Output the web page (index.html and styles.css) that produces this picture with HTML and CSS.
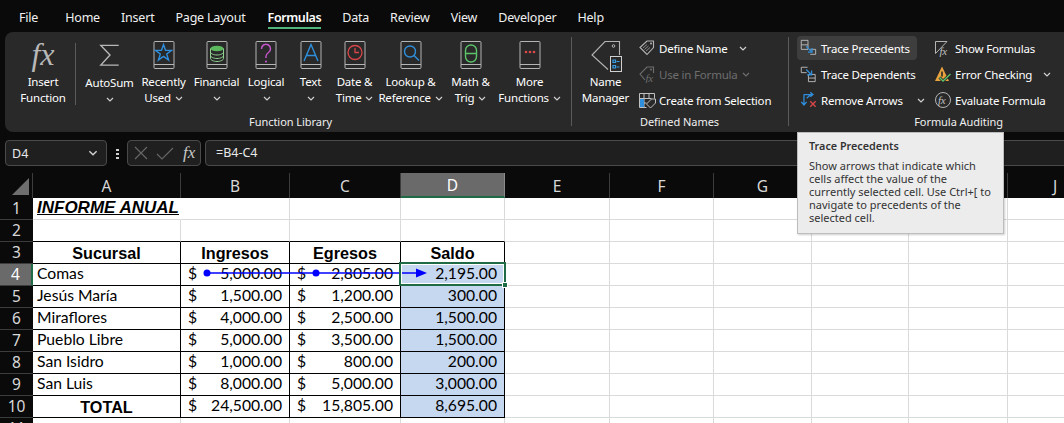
FILE: index.html
```html
<!DOCTYPE html>
<html lang="en">
<head>
  <meta charset="UTF-8">
  <title>INFORME ANUAL - Excel</title>
  <link rel="stylesheet" href="styles.css">
</head>
<body>
  <svg class="defs" aria-hidden="true">
    <symbol id="book" viewBox="0 0 22 28">
      <path d="M2 .5h18a1 1 0 0 1 1 1v25a1 1 0 0 1-1 1H2a1 1 0 0 1-1-1v-25a1 1 0 0 1 1-1zM1 23.5h20" fill="none" stroke="#b4b4b4" stroke-width="1"/>
    </symbol>
    <symbol id="chev" viewBox="0 0 8 5">
      <path d="M1 1l3 3 3-3" fill="none" stroke="currentColor" stroke-width="1.2"/>
    </symbol>
  </svg>

  <nav class="tabs">
    <span class="tab tab-file">File</span>
    <span class="tab">Home</span>
    <span class="tab">Insert</span>
    <span class="tab">Page Layout</span>
    <span class="tab active">Formulas</span>
    <span class="tab">Data</span>
    <span class="tab">Review</span>
    <span class="tab">View</span>
    <span class="tab">Developer</span>
    <span class="tab">Help</span>
  </nav>

  <section class="ribbon">
    <div class="group group-lib">
      <div class="lib-tools">
        <div class="tool">
          <span class="fx-big">fx</span>
          <span class="tool-label">Insert<br>Function</span>
        </div>
        <div class="tool-sep"></div>
        <div class="tool tool-low">
          <svg class="book" viewBox="0 0 24 28"><path d="M21.5 3.5H2l10 10.500L2 25h19.500" fill="none" stroke="#b8b8b8" stroke-width="1.500"/></svg>
          <span class="tool-label">AutoSum<br><svg class="chev"><use href="#chev"/></svg></span>
        </div>
        <div class="tool">
          <svg class="book" viewBox="0 0 22 28"><use href="#book"/><path d="M10.500 3.500L12.500 9.200 18.600 9.400 13.700 13 15.500 18.900 10.500 15.400 5.500 18.900 7.300 13 2.400 9.400 8.500 9.200z" fill="none" stroke="#2f8fdc" stroke-width="1.400"/></svg>
          <span class="tool-label">Recently<br>Used <svg class="chev"><use href="#chev"/></svg></span>
        </div>
        <div class="tool">
          <svg class="book" viewBox="0 0 22 28"><use href="#book"/><ellipse cx="11" cy="7.500" rx="6.500" ry="2.800" fill="#5cb85c"/><path d="M4.500 7.500v10c0 1.500 3 3 6.500 3s6.500-1.500 6.500-3v-10M4.500 11c0 1.500 3 3 6.500 3s6.500-1.500 6.500-3M4.500 14.500c0 1.500 3 3 6.500 3s6.500-1.500 6.500-3" fill="none" stroke="#8fd08f" stroke-width="1"/></svg>
          <span class="tool-label">Financial<br><svg class="chev"><use href="#chev"/></svg></span>
        </div>
        <div class="tool">
          <svg class="book" viewBox="0 0 22 28"><use href="#book"/><path d="M6.500 8a4.500 4.500 0 1 1 7 3.500c-1.500 1-2.500 2-2.500 4v1.500" fill="none" stroke="#c455c8" stroke-width="1.500"/><circle cx="11" cy="20.500" r="1.100" fill="#c455c8"/></svg>
          <span class="tool-label">Logical<br><svg class="chev"><use href="#chev"/></svg></span>
        </div>
        <div class="tool">
          <svg class="book" viewBox="0 0 22 28"><use href="#book"/><path d="M4 20L11 3.500 18 20M6.300 14.500h9.400" fill="none" stroke="#2f8fdc" stroke-width="1.400"/></svg>
          <span class="tool-label">Text<br><svg class="chev"><use href="#chev"/></svg></span>
        </div>
        <div class="tool">
          <svg class="book" viewBox="0 0 22 28"><use href="#book"/><circle cx="11" cy="11.500" r="7" fill="none" stroke="#d9464a" stroke-width="1.300"/><path d="M11 7v4.500h4" fill="none" stroke="#d9464a" stroke-width="1.300"/></svg>
          <span class="tool-label">Date &amp;<br>Time <svg class="chev"><use href="#chev"/></svg></span>
        </div>
        <div class="tool">
          <svg class="book" viewBox="0 0 22 28"><use href="#book"/><circle cx="10" cy="10.500" r="5.500" fill="none" stroke="#2f8fdc" stroke-width="1.400"/><path d="M14 14.500l5 5" fill="none" stroke="#2f8fdc" stroke-width="1.400"/></svg>
          <span class="tool-label">Lookup &amp;<br>Reference <svg class="chev"><use href="#chev"/></svg></span>
        </div>
        <div class="tool">
          <svg class="book" viewBox="0 0 22 28"><use href="#book"/><rect x="5.500" y="4" width="11" height="17" rx="5.500" fill="none" stroke="#5cc46a" stroke-width="1.400"/><path d="M5.500 12.500h11" stroke="#5cc46a" stroke-width="1.400"/></svg>
          <span class="tool-label">Math &amp;<br>Trig <svg class="chev"><use href="#chev"/></svg></span>
        </div>
        <div class="tool">
          <svg class="book" viewBox="0 0 22 28"><use href="#book"/><circle cx="7" cy="11" r="1.300" fill="#e04848"/><circle cx="11" cy="11" r="1.300" fill="#e04848"/><circle cx="15" cy="11" r="1.300" fill="#e04848"/></svg>
          <span class="tool-label">More<br>Functions <svg class="chev"><use href="#chev"/></svg></span>
        </div>
      </div>
      <div class="group-name">Function Library</div>
    </div>

    <div class="group group-names">
      <div class="names-tools">
        <div class="tool tool-name">
          <svg class="name-icon" viewBox="0 0 40 33">
            <path d="M22 33.500L6 19 19 5.500h14.500V19" fill="none" stroke="#b4b4b4" stroke-width="1.100"/>
            <circle cx="27.500" cy="10" r="1.300" fill="none" stroke="#b4b4b4"/>
            <rect x="24.500" y="20.500" width="11" height="15" fill="#292929" stroke="#d0d0d0"/>
            <path d="M27 24h2.500v2.500H27zM27 29.500h2.500V32H27z" fill="none" stroke="#3a9be6" stroke-width="1.200"/>
            <path d="M30.500 25.500h3M30.500 31h3" stroke="#3a9be6" stroke-width="1.200"/>
          </svg>
          <span class="tool-label">Name<br>Manager</span>
        </div>
        <div class="small-col">
          <div class="small-row">
            <svg class="small-icon" viewBox="0 0 18 18"><path d="M2 8.500L9 2h6.500v6.500L9 15.500z" fill="none" stroke="#b4b4b4" stroke-width="1.100"/><path d="M5 9l4-3.500M6.500 10.500L10.500 7M8 12l4-3.500" stroke="#8a8a8a"/><circle cx="13" cy="4.500" r="1" fill="#b4b4b4"/></svg>
            <span>Define Name</span>
            <svg class="chev chev-define"><use href="#chev"/></svg>
          </div>
          <div class="small-row disabled">
            <svg class="small-icon" viewBox="0 0 18 18"><path d="M7 15L2 9l7-7h6.500v6" fill="none" stroke="#6e6e6e" stroke-width="1.100"/><circle cx="13" cy="4.500" r="1" fill="#6e6e6e"/><text x="7.500" y="16.500" class="fx-small">fx</text></svg>
            <span>Use in Formula</span>
            <svg class="chev"><use href="#chev"/></svg>
          </div>
          <div class="small-row">
            <svg class="small-icon" viewBox="0 0 18 18"><path d="M1.500 2.500h15v5M1.500 2.500v14h7M1.500 7.500h12M1.500 12h7M6 2.500v14M11 2.500v5" fill="none" stroke="#c0c0c0"/><path d="M2 8h4v8H2z" fill="#2f8fdc"/><path d="M8.500 13l5-5h4v4l-5 5z" fill="#292929" stroke="#c0c0c0"/></svg>
            <span>Create from Selection</span>
          </div>
        </div>
      </div>
      <div class="group-name">Defined Names</div>
    </div>

    <div class="group group-audit">
      <div class="audit-tools">
        <div class="small-col col-trace">
          <div class="small-row hover">
            <svg class="small-icon" viewBox="0 0 20 20"><path d="M2.500 1.500h7.500v10H2.500zM2.500 6.500h7.500M12.500 11.500h6v5.500h-6" fill="none" stroke="#c0c0c0"/><path d="M8 8l6 6M14.500 10v4.500H10" fill="none" stroke="#2f8fdc" stroke-width="1.400"/></svg>
            <span>Trace Precedents</span>
          </div>
          <div class="small-row">
            <svg class="small-icon" viewBox="0 0 20 20"><path d="M9.500 2.500h-7v6h6M10.500 10.500h7.500v8h-7.500zM10.500 14.500h7.500" fill="none" stroke="#c0c0c0"/><path d="M8 5l5.500 5.500M14 6v5h-5" fill="none" stroke="#2f8fdc" stroke-width="1.400"/></svg>
            <span>Trace Dependents</span>
          </div>
          <div class="small-row">
            <svg class="small-icon" viewBox="0 0 20 20"><path d="M5.500 4v11M2.500 12l3 3.500 3-3.500M5.500 4h10M12.500 1.500l3 2.500-3 2.500M8.500 8l4-3.500" fill="none" stroke="#2f8fdc" stroke-width="1.400"/><path d="M12.500 11.500l6 6M18.500 11.500l-6 6" stroke="#d9464a" stroke-width="1.500"/></svg>
            <span>Remove Arrows</span>
            <svg class="chev chev-remove"><use href="#chev"/></svg>
          </div>
        </div>
        <div class="small-col col-check">
          <div class="small-row">
            <svg class="small-icon" viewBox="0 0 18 18"><path d="M13 2.500H1.500v12M1.500 14.500l11.500-12" fill="none" stroke="#b4b4b4"/><text x="5.500" y="16" class="fx-tool">fx</text></svg>
            <span>Show Formulas</span>
          </div>
          <div class="small-row">
            <svg class="small-icon" viewBox="0 0 18 18"><path d="M8 1.500L1 16h14z" fill="#e8a33d"/><path d="M8 6.500v5" stroke="#292929" stroke-width="1.600"/><path d="M5.500 12.500l3.500 3.500 7.500-7" fill="none" stroke="#292929" stroke-width="3"/><path d="M5.500 12.500l3.500 3.500 7.500-7" fill="none" stroke="#5cc46a" stroke-width="1.300"/></svg>
            <span>Error Checking</span>
            <svg class="chev chev-error"><use href="#chev"/></svg>
          </div>
          <div class="small-row">
            <svg class="small-icon" viewBox="0 0 18 18"><circle cx="9" cy="9" r="7.500" fill="none" stroke="#b4b4b4"/><text x="4" y="13" class="fx-tool">fx</text></svg>
            <span>Evaluate Formula</span>
          </div>
        </div>
      </div>
      <div class="group-name name-audit">Formula Auditing</div>
    </div>
  </section>

  <div class="formula-bar">
    <div class="name-box">
      <span>D4</span>
      <svg class="chev chev-box"><use href="#chev"/></svg>
    </div>
    <span class="bar-dots"></span>
    <div class="fx-box">
      <svg class="fx-actions" viewBox="0 0 44 16"><path d="M2 2l12 12M14 2L2 14" stroke="#666" stroke-width="1.200"/><path d="M24 9l5 5 11-11" fill="none" stroke="#666" stroke-width="1.200"/></svg>
      <span class="fx-mark">fx</span>
    </div>
    <div class="formula-input">=B4-C4</div>
  </div>

  <main class="sheet">
    <table class="grid">
      <colgroup>
        <col class="c-head"><col class="c-a"><col class="c-b"><col class="c-c"><col class="c-d"><col class="c-e"><col class="c-f"><col class="c-g"><col class="c-h"><col class="c-i"><col class="c-j">
      </colgroup>
      <tr class="head-row">
        <th class="corner"><span class="corner-mark"></span></th>
        <th>A</th><th>B</th><th>C</th><th class="sel">D</th><th>E</th><th>F</th><th>G</th><th>H</th><th>I</th><th>J</th>
      </tr>
      <tr>
        <th class="num">1</th>
        <td class="title no-r"><span>INFORME ANUAL</span></td><td></td><td></td><td></td><td></td><td></td><td></td><td></td><td></td><td></td>
      </tr>
      <tr>
        <th class="num">2</th>
        <td class="bb"></td><td class="bb"></td><td class="bb"></td><td class="bb"></td><td></td><td></td><td></td><td></td><td></td><td></td>
      </tr>
      <tr>
        <th class="num">3</th>
        <td class="b hd">Sucursal</td><td class="b hd">Ingresos</td><td class="b hd">Egresos</td><td class="b hd">Saldo</td><td></td><td></td><td></td><td></td><td></td><td></td>
      </tr>
      <tr>
        <th class="num num-sel">4</th>
        <td class="b name">Comas</td><td class="b amt"><span class="cur">$</span>5,000.00</td><td class="b amt"><span class="cur">$</span>2,805.00</td><td class="b amt fill">2,195.00</td><td></td><td></td><td></td><td></td><td></td><td></td>
      </tr>
      <tr>
        <th class="num">5</th>
        <td class="b name">Jesús María</td><td class="b amt"><span class="cur">$</span>1,500.00</td><td class="b amt"><span class="cur">$</span>1,200.00</td><td class="b amt fill">300.00</td><td></td><td></td><td></td><td></td><td></td><td></td>
      </tr>
      <tr>
        <th class="num">6</th>
        <td class="b name">Miraflores</td><td class="b amt"><span class="cur">$</span>4,000.00</td><td class="b amt"><span class="cur">$</span>2,500.00</td><td class="b amt fill">1,500.00</td><td></td><td></td><td></td><td></td><td></td><td></td>
      </tr>
      <tr>
        <th class="num">7</th>
        <td class="b name">Pueblo Libre</td><td class="b amt"><span class="cur">$</span>5,000.00</td><td class="b amt"><span class="cur">$</span>3,500.00</td><td class="b amt fill">1,500.00</td><td></td><td></td><td></td><td></td><td></td><td></td>
      </tr>
      <tr>
        <th class="num">8</th>
        <td class="b name">San Isidro</td><td class="b amt"><span class="cur">$</span>1,000.00</td><td class="b amt"><span class="cur">$</span>800.00</td><td class="b amt fill">200.00</td><td></td><td></td><td></td><td></td><td></td><td></td>
      </tr>
      <tr>
        <th class="num">9</th>
        <td class="b name">San Luis</td><td class="b amt"><span class="cur">$</span>8,000.00</td><td class="b amt"><span class="cur">$</span>5,000.00</td><td class="b amt fill">3,000.00</td><td></td><td></td><td></td><td></td><td></td><td></td>
      </tr>
      <tr>
        <th class="num">10</th>
        <td class="b total">TOTAL</td><td class="b amt"><span class="cur">$</span>24,500.00</td><td class="b amt"><span class="cur">$</span>15,805.00</td><td class="b amt fill">8,695.00</td><td></td><td></td><td></td><td></td><td></td><td></td>
      </tr>
      <tr>
        <th class="num">11</th>
        <td></td><td></td><td></td><td></td><td></td><td></td><td></td><td></td><td></td><td></td>
      </tr>
    </table>

    <svg class="arrow" viewBox="0 0 240 12">
      <path d="M4 6h210" stroke="#0000ff" stroke-width="1.500"/>
      <circle cx="4" cy="6" r="3.500" fill="#0000ff"/>
      <circle cx="113" cy="6" r="3.500" fill="#0000ff"/>
      <path d="M213 1.500L224 6l-11 4.500z" fill="#0000ff"/>
    </svg>
    <div class="selection"><span class="handle"></span></div>
  </main>

  <aside class="tooltip">
    <h2>Trace Precedents</h2>
    <p>Show arrows that indicate which<br>cells affect the value of the<br>currently selected cell. Use Ctrl+[ to<br>navigate to precedents of the<br>selected cell.</p>
  </aside>
</body>
</html>
```

FILE: styles.css
```css
* {
  box-sizing: border-box;
}

body {
  margin: 0;
  width: 1064px;
  height: 423px;
  overflow: hidden;
  position: relative;
  background-color: #0a0a0a;
  color: #fff;
  font-family: "Noto Sans", "Open Sans", sans-serif;
  font-size: 12px;
}

.defs {
  position: absolute;
  width: 0;
  height: 0;
}

/* tabs */
.tabs {
  height: 32px;
  display: flex;
  gap: 21px;
  padding-left: 19px;
}

.tab {
  height: 29px;
  line-height: 35px;
  font-size: 12.5px;
  letter-spacing: -0.2px;
  color: #f0f0f0;
  white-space: nowrap;
}

.tab-file {
  margin-right: 6px;
}

.tab.active {
  margin-left: 1px;
  font-weight: 600;
  letter-spacing: -0.4px;
  color: #fff;
  border-bottom: 2px solid #4fb57c;
}

/* ribbon */
.ribbon {
  height: 100px;
  margin-left: 5px;
  display: flex;
  background-color: #292929;
  border-radius: 8px 0 0 8px;
  overflow: hidden;
}

.group {
  display: flex;
  flex-direction: column;
  position: relative;
}

.group + .group::before {
  content: "";
  position: absolute;
  left: 0;
  top: 5px;
  height: 89px;
  border-left: 1px solid #5a5a5a;
}

.group-lib {
  width: 566px;
  padding: 0 4px 0 9px;
}

.group-names {
  width: 217px;
}

.group-audit {
  width: 276px;
}

.lib-tools {
  height: 84px;
  display: grid;
  grid-template-columns: 58px 12px 51px 57px 49px 50px 39px 49px 63px 57px 61px;
}

.tool {
  display: flex;
  flex-direction: column;
  align-items: center;
  padding-top: 9px;
}

.tool-sep {
  width: 1px;
  height: 62px;
  margin: 11px 0 0 3px;
  background-color: #5a5a5a;
}

.book {
  width: 22px;
  height: 28px;
  flex: none;
}

.tool-label {
  margin-top: 5px;
  font-size: 11.5px;
  letter-spacing: -0.2px;
  line-height: 16px;
  text-align: center;
  white-space: nowrap;
}

.tool-low .tool-label {
  margin-top: 6px;
}

.chev {
  display: inline-block;
  width: 8px;
  height: 5px;
  color: #d0d0d0;
  vertical-align: 1px;
  margin-left: 1px;
}

.fx-big {
  height: 28px;
  font-family: "Liberation Serif", serif;
  font-style: italic;
  font-size: 32px;
  line-height: 26px;
  color: #b8b8b8;
}

.group-name {
  height: 16px;
  line-height: 12px;
  font-size: 11px;
  letter-spacing: -0.05px;
  text-align: center;
  color: #f0f0f0;
}

.name-audit {
  text-align: right;
  padding-right: 61px;
}

/* defined names and formula auditing */
.names-tools {
  height: 84px;
  display: flex;
  padding-left: 6px;
}

.tool-name {
  width: 57px;
  flex: none;
}

.name-icon {
  width: 40px;
  height: 33px;
  margin-top: -5px;
  overflow: visible;
}

.small-col {
  display: flex;
  flex-direction: column;
  padding-top: 3px;
  font-size: 11.5px;
  letter-spacing: -0.2px;
}

.names-tools .small-col {
  margin-left: 2px;
}

.small-row {
  height: 26px;
  display: flex;
  align-items: center;
  gap: 3px;
  padding-left: 2px;
  white-space: nowrap;
}

.small-icon {
  width: 18px;
  height: 18px;
  flex: none;
}

.disabled {
  color: #6e6e6e;
}

.disabled .chev {
  color: #6e6e6e;
}

.fx-small,
.fx-tool {
  font-family: "Liberation Serif", serif;
  font-style: italic;
  font-size: 11px;
  fill: #c0c0c0;
}

.fx-small {
  fill: #6e6e6e;
}

.chev-define {
  margin-left: 8px;
}

.chev-remove {
  margin-left: 10px;
}

.chev-error {
  margin-left: 8px;
}

.audit-tools {
  height: 84px;
  display: flex;
  padding-left: 9px;
}

.col-trace {
  width: 135px;
  flex: none;
}

.col-trace .small-row {
  gap: 4px;
}

.hover {
  width: 120px;
  background-color: #3e3e3e;
  border-radius: 4px;
}

.small-row.hover {
  height: 24px;
  margin-bottom: 2px;
  margin-top: 1px;
}

.col-trace .small-row:nth-child(2) {
  margin-top: -1px;
}

/* formula bar */
.formula-bar {
  height: 26px;
  margin-top: 8px;
  padding-left: 5px;
  display: flex;
  font-size: 12.5px;
}

.name-box,
.fx-box,
.formula-input {
  border: 1px solid #4a4a4a;
  border-radius: 4px;
  background-color: #1f1f1f;
  height: 26px;
}

.name-box {
  width: 102px;
  padding: 0 7px 0 6px;
  display: flex;
  align-items: center;
  justify-content: space-between;
  color: #e8e8e8;
}

.chev-box {
  width: 10px;
  height: 6px;
  margin-right: 1px;
}

.bar-dots {
  width: 3px;
  height: 11px;
  margin: 8px 8px 0 9px;
  background-image: radial-gradient(circle, #d0d0d0 1.200px, transparent 1.400px);
  background-size: 3px 4px;
}

.fx-box {
  width: 74px;
  display: flex;
  align-items: center;
  padding-left: 5px;
}

.fx-actions {
  width: 44px;
  height: 16px;
  flex: none;
}

.fx-mark {
  margin-left: 6px;
  font-family: "Liberation Serif", serif;
  font-style: italic;
  font-size: 17px;
  color: #c8c8c8;
}

.formula-input {
  flex: 1;
  margin-left: 4px;
  margin-right: -10px;
  padding-left: 10px;
  line-height: 24px;
  color: #e8e8e8;
}

/* sheet */
.sheet {
  position: relative;
  margin-top: 7px;
}

.grid {
  table-layout: fixed;
  width: 1103px;
  border-collapse: separate;
  border-spacing: 0;
}

.c-head { width: 33px; }
.c-a { width: 148px; }
.c-b { width: 109px; }
.c-c { width: 111px; }
.c-d { width: 104px; }
.c-e { width: 105px; }
.c-f { width: 104px; }
.c-g { width: 98px; }
.c-h { width: 97px; }
.c-i { width: 99px; }
.c-j { width: 95px; }

.head-row th {
  height: 25px;
  font-weight: normal;
  font-size: 15.5px;
  color: #d8d8d8;
  border-right: 1px solid #3c3c3c;
  text-align: center;
  padding: 0;
}

.head-row th.corner {
  position: relative;
}

.corner-mark {
  position: absolute;
  right: 3px;
  bottom: 3px;
  width: 0;
  height: 0;
  border-left: 17px solid transparent;
  border-bottom: 17px solid #6e6e6e;
}

.head-row th.sel {
  background-color: #6a6a6a;
  color: #fff;
  border-bottom: 2px solid #1e6b45;
  border-right-color: #8a8a8a;
}

.num {
  height: 22px;
  padding: 0 0 1px;
  font-weight: normal;
  font-size: 15.5px;
  line-height: 20px;
  color: #d8d8d8;
  background-color: #0a0a0a;
  border-bottom: 1px solid #3c3c3c;
}

.num-sel {
  background-color: #6a6a6a;
  color: #fff;
  border-right: 2px solid #1e6b45;
}

td {
  height: 22px;
  padding: 0 0 2px;
  background-color: #fff;
  color: #000;
  border-right: 1px solid #dadada;
  border-bottom: 1px solid #dadada;
  font-family: "Lato", "Liberation Sans", sans-serif;
  font-size: 15.7px;
  line-height: 19px;
  white-space: nowrap;
}

td.no-r {
  border-right-color: #fff;
}

td.b {
  border-right-color: #000;
  border-bottom-color: #000;
}

td.bb {
  border-bottom-color: #000;
}

.title {
  padding-left: 4px;
  font-family: "Liberation Sans", sans-serif;
  font-weight: bold;
  font-style: italic;
  font-size: 17px;
}

.title span {
  text-decoration: underline;
}

.hd,
.total {
  padding: 1px 0 0;
  line-height: 20px;
  text-align: center;
  font-family: "Liberation Sans", sans-serif;
  font-weight: bold;
  font-size: 16.2px;
}

.name {
  padding-left: 4px;
}

.amt {
  padding: 0 7px 2px;
  text-align: right;
}

.cur {
  float: left;
}

.fill {
  background-color: #c6d8f0;
}

/* overlays */
.arrow {
  position: absolute;
  left: 203px;
  top: 94px;
  width: 240px;
  height: 12px;
}

.selection {
  position: absolute;
  left: 399px;
  top: 89px;
  width: 107px;
  height: 24px;
  border: 2px solid #1e6b45;
  box-shadow: inset 0 0 0 1px #fff;
}

.handle {
  position: absolute;
  right: -4px;
  bottom: -4px;
  width: 6px;
  height: 6px;
  background-color: #1e6b45;
  border: 1px solid #fff;
}

.tooltip {
  position: absolute;
  left: 797px;
  top: 132px;
  width: 207px;
  height: 102px;
  padding: 6px 11px;
  background-color: #ececec;
  border: 1px solid #bdbdbd;
  box-shadow: 1px 1px 2px rgba(0, 0, 0, 0.2);
  color: #333;
  font-size: 11px;
}

.tooltip h2 {
  margin: 0 0 6px;
  font-size: 10.8px;
  font-weight: 600;
  line-height: 14px;
}

.tooltip p {
  margin: 0;
  line-height: 13px;
  white-space: nowrap;
}
```
